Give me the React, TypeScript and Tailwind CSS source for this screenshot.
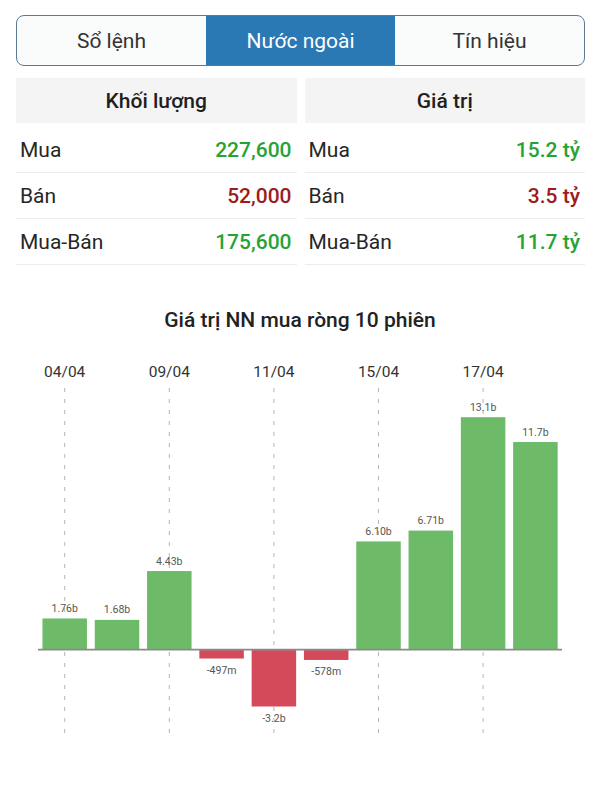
import { useState } from 'react';

type Tab = 'orders' | 'foreign' | 'signals';

const tabs: { id: Tab; label: string }[] = [
  { id: 'orders', label: 'Sổ lệnh' },
  { id: 'foreign', label: 'Nước ngoài' },
  { id: 'signals', label: 'Tín hiệu' },
];

const volumeRows = [
  { label: 'Mua', value: '227,600', up: true },
  { label: 'Bán', value: '52,000', up: false },
  { label: 'Mua-Bán', value: '175,600', up: true },
];

const valueRows = [
  { label: 'Mua', value: '15.2 tỷ', up: true },
  { label: 'Bán', value: '3.5 tỷ', up: false },
  { label: 'Mua-Bán', value: '11.7 tỷ', up: true },
];

// net foreign buy value per session, in billions
const sessions = [
  { date: '04/04', value: 1.76, label: '1.76b' },
  { date: '', value: 1.68, label: '1.68b' },
  { date: '09/04', value: 4.43, label: '4.43b' },
  { date: '', value: -0.497, label: '-497m' },
  { date: '11/04', value: -3.2, label: '-3.2b' },
  { date: '', value: -0.578, label: '-578m' },
  { date: '15/04', value: 6.1, label: '6.10b' },
  { date: '', value: 6.71, label: '6.71b' },
  { date: '17/04', value: 13.1, label: '13.1b' },
  { date: '', value: 11.7, label: '11.7b' },
];

function StatTable({ title, rows }: { title: string; rows: typeof volumeRows }) {
  return (
    <div>
      <div className="h-[45px] pt-[2px] bg-[#f4f4f4] flex items-center justify-center text-[21px] font-medium text-[#1f1f1f]">
        {title}
      </div>
      <div className="mt-[4px]">
        {rows.map(row => (
          <div
            key={row.label}
            className="h-[46px] pt-[3px] flex items-center justify-between pl-[4px] pr-[5px] border-b border-[#ededed] text-[21px]"
          >
            <span className="text-[#262626]">{row.label}</span>
            <span className={`font-medium ${row.up ? 'text-[#27a336]' : 'text-[#9e1b20]'}`}>{row.value}</span>
          </div>
        ))}
      </div>
    </div>
  );
}

function NetBuyChart() {
  const baseY = 308.7;
  const scale = 17.75;
  const barW = 44.5;
  const center = (i: number) => 64.7 + i * 52.3;

  return (
    <svg width={600} height={420} className="block">
      {/* date labels and dashed grid lines */}
      {sessions.map((s, i) =>
        s.date ? (
          <g key={`grid-${i}`}>
            <text x={center(i)} y={36} textAnchor="middle" fontSize={15.5} fill="#333">
              {s.date}
            </text>
            <line
              x1={center(i)}
              x2={center(i)}
              y1={47}
              y2={397}
              stroke="#b5b5b5"
              strokeWidth={1}
              strokeDasharray="4 7"
            />
          </g>
        ) : null
      )}

      {/* value labels */}
      {sessions.map((s, i) => {
        const h = Math.abs(s.value) * scale;
        const y = s.value >= 0 ? baseY - h - 6.5 : baseY + h + 15.5;
        return (
          <text key={`lbl-${i}`} x={center(i)} y={y} textAnchor="middle" fontSize={10.5} fill="#555">
            {s.label}
          </text>
        );
      })}

      {/* bars */}
      {sessions.map((s, i) => {
        const h = Math.abs(s.value) * scale;
        return (
          <rect
            key={`bar-${i}`}
            x={center(i) - barW / 2}
            y={s.value >= 0 ? baseY - h : baseY}
            width={barW}
            height={h}
            fill={s.value >= 0 ? '#6dbb68' : '#d54a5b'}
          />
        );
      })}

      <line x1={38} x2={562} y1={baseY} y2={baseY} stroke="#8a8a8a" strokeWidth={1.8} />
    </svg>
  );
}

export default function App() {
  const [activeTab, setActiveTab] = useState<Tab>('foreign');

  return (
    <div className="w-[600px] min-h-[800px] bg-white font-['Roboto','Noto_Sans',sans-serif]">
      <div className="pt-[15px] pl-[16px] pr-[15px]">
        {/* Tabs */}
        <div className="h-[51px] grid grid-cols-3 rounded-[8px] border-[1.5px] border-[#5c7a91] bg-[#fafbfb] overflow-hidden">
          {tabs.map(tab => (
            <button
              key={tab.id}
              onClick={() => setActiveTab(tab.id)}
              className={`flex items-center justify-center pt-[3px] text-[21px] ${
                activeTab === tab.id ? 'bg-[#2a78b4] text-white' : 'text-[#333]'
              }`}
            >
              {tab.label}
            </button>
          ))}
        </div>

        {/* Volume / value tables */}
        <div className="mt-[12px] grid grid-cols-2 gap-[8px]">
          <StatTable title="Khối lượng" rows={volumeRows} />
          <StatTable title="Giá trị" rows={valueRows} />
        </div>
      </div>

      {/* Chart */}
      <div className="mt-[42px] h-[28px] flex items-center justify-center text-[21px] font-medium text-[#222]">
        Giá trị NN mua ròng 10 phiên
      </div>
      <div className="mt-[6px]">
        <NetBuyChart />
      </div>
    </div>
  );
}
